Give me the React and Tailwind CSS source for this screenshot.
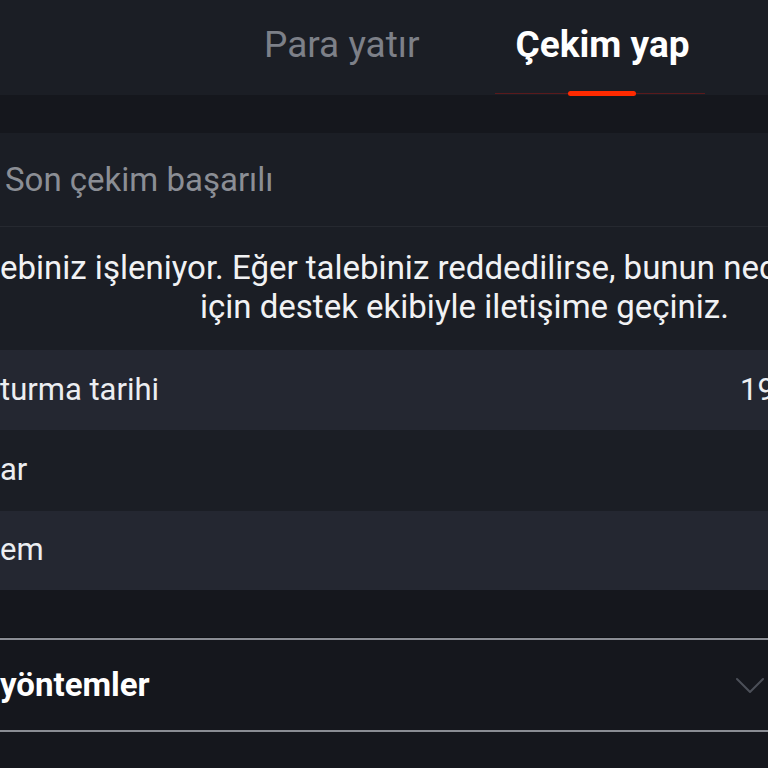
// a label whose first letters sit left of the visible edge
function Clipped({ hidden, shown, className = "" }) {
  return (
    <div className={`flex whitespace-nowrap ${className}`}>
      <div className="w-0 flex justify-end">{hidden}</div>
      <div>{shown}</div>
    </div>
  );
}

function Row({ hidden, shown, value, dark, h = "h-[80px]" }) {
  return (
    <div
      className={`flex items-center ${h} ${
        dark ? "bg-[#1b1e25]" : "bg-[#242731]"
      }`}
    >
      <Clipped hidden={hidden} shown={shown} className="flex-1 text-[#eceef1]" />
      {value && (
        <div className="w-[28px] shrink-0 whitespace-nowrap text-[#eceef1]">
          {value}
        </div>
      )}
    </div>
  );
}

export default function App() {
  return (
    <div className="w-[768px] h-[768px] overflow-hidden bg-[#15171d] font-['Roboto',sans-serif] text-[31px]">
      <header className="h-[95px] bg-[#1b1e25] flex pl-[264px] gap-[96px]">
        <div className="pt-[23px] leading-[44px] text-[37px] text-[#7d8088]">
          Para yatır
        </div>
        <div className="relative pt-[23px] leading-[44px] text-[37px] font-bold text-white">
          Çekim yap
          <div className="absolute left-[-21px] right-[-15px] bottom-[1px] h-px bg-[#5a1a1c]" />
          <div className="absolute left-[52px] w-[68px] bottom-[-1px] h-[5px] rounded-full bg-[#ff2a00]" />
        </div>
      </header>

      <div className="h-[38px]" />

      <div className="bg-[#1b1e25]">
        <div className="h-[94px] flex items-center pl-[5px] text-[33px] text-[#8b8e95] border-b border-[#262930]">
          Son çekim başarılı
        </div>
        <div className="pt-[21px] pb-[24px] leading-[39px] text-[33px] text-[#f1f2f4]">
          <Clipped
            hidden="Çekim tal"
            shown="ebiniz işleniyor. Eğer talebiniz reddedilirse, bunun nedenini öğrenmek"
          />
          <div className="pl-[200px] whitespace-nowrap">
            için destek ekibiyle iletişime geçiniz.
          </div>
        </div>
      </div>

      <Row hidden="Oluş" shown="turma tarihi" value="19.03.2024 14:32" />
      <Row hidden="Mikt" shown="ar" dark h="h-[81px]" />
      <Row hidden="Sist" shown="em" h="h-[79px]" />

      <div className="h-[48px] border-b border-[#0f1115]" />

      <div className="border-y-2 border-[#8a8d94] h-[94px] flex items-center pr-[3px] bg-[#15171d]">
        <Clipped
          hidden="Diğer "
          shown="yöntemler"
          className="flex-1 font-bold text-[33px] text-white"
        />
        <svg width="30" height="20" viewBox="0 0 30 20" fill="none">
          <polyline
            points="2,4 15,17 28,4"
            stroke="#4b4f58"
            strokeWidth="2"
            strokeLinecap="round"
            strokeLinejoin="round"
          />
        </svg>
      </div>
    </div>
  );
}
